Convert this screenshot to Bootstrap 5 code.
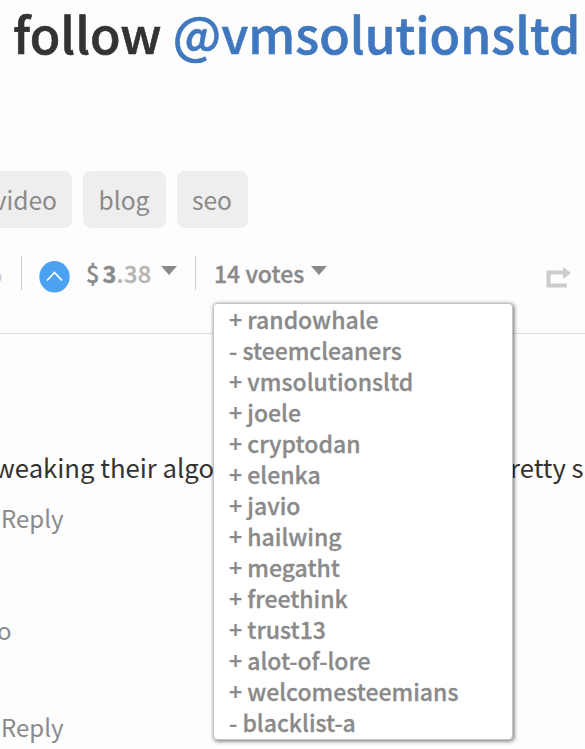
<!DOCTYPE html>
<html lang="en">
<head>
<meta charset="utf-8">
<title>Post votes</title>
<link rel="stylesheet" href="https://cdn.jsdelivr.net/npm/bootstrap@5.3.0/dist/css/bootstrap.min.css">
<style>
body{font-family:"Noto Sans CJK SC",sans-serif;background:#fdfdfd;color:#8a8a8a;height:749px;font-size:24px;line-height:31px;white-space:nowrap}
.post-title{height:72px;padding-left:13px;font-size:49.8px;line-height:64px;font-weight:500;color:#333;-webkit-text-stroke:.6px}
.post-title a{color:#4078c0}
.tags{margin-top:99px;height:57px;gap:11px}
.tag{height:57px;background:#eee;border-radius:8px;font-size:24.6px;line-height:56px;text-align:center}
.tag-video{width:82px;margin-left:-10px;padding-right:15px;text-align:right}
.tag-blog{width:83px;padding-right:1px}
.tag-seo{width:71px;padding-right:1px}
.actions{height:106px;padding-top:28px;border-bottom:1px solid #ddd;font-weight:500}
.age{width:33px;margin-left:-12px;padding-top:2px;color:#ccc;font-weight:400}
.rule{width:1px;height:34px;background:#ccc}
.upvote{width:31px;height:33px;margin:4px 0 0 17px}
.payout,.votes{margin-top:2px;-webkit-text-stroke:.35px}
.payout{margin-left:16px;width:67px;font-size:23.6px}
.dollars{margin-left:3px}
.votes{margin-left:18px;width:89px;font-size:23px}
.caret{width:16px;height:9px;margin:10px 0 0 8px;fill:#8a8a8a}
.after-payout{margin-left:18px}
.share{margin:11px 14px 0 0}
.cents{color:#b5b5b5;letter-spacing:.5px}
.vote-menu{left:213px;top:303px;width:300px;height:437px;padding:0 0 0 15px;border:1px solid #c4c4c4;border-radius:4px;box-shadow:1px 1px 4px rgba(0,0,0,.6);background:#fff;font-weight:500;font-size:23px;-webkit-text-stroke:.3px}
.vote-menu li{height:31px}
.comment{margin-top:117px;height:32px;font-size:25.7px;line-height:32px;color:#333}
.algo{width:214px;direction:rtl}
.pretty{margin-left:296px}
.reply{padding-left:1px}
.first-reply{margin-top:19px}
.author{margin-top:81px;margin-left:-3px}
.second-reply{margin-top:66px}
</style>
<script src="https://cdn.jsdelivr.net/npm/bootstrap@5.3.0/dist/js/bootstrap.bundle.min.js"></script>
</head>
<body class="position-relative overflow-hidden">
<h1 class="post-title mb-0">follow <a href="#" class="text-decoration-none">@vmsolutionsltd</a></h1>
<div class="tags d-flex">
<span class="tag tag-video">video</span><span class="tag tag-blog">blog</span><span class="tag tag-seo">seo</span>
</div>
<div class="actions d-flex align-items-start">
<span class="age">o</span>
<span class="rule"></span>
<svg class="upvote" viewBox="0 0 31 33"><ellipse cx="15.5" cy="16.8" rx="15.2" ry="15.8" fill="#4ba2f2"/><path d="M8 20.5 15.5 12.5 23 20.5" fill="none" stroke="#fff" stroke-width="1.8"/></svg>
<span class="payout">$<b class="dollars">3</b><span class="cents">.38</span></span>
<svg class="caret" viewBox="0 0 16 9"><path d="M0 0h16L8 9z"/></svg>
<span class="rule after-payout"></span>
<span class="votes">14 votes</span>
<svg class="caret" viewBox="0 0 16 9"><path d="M0 0h16L8 9z"/></svg>
<svg class="share ms-auto" width="25" height="22" viewBox="0 0 25 22"><path d="M17 5.5H2.5V18.5H21" fill="none" stroke="#ccc" stroke-width="4"/><path d="M17 0v12l8-6z" fill="#ccc"/></svg>
</div>
<ul class="vote-menu list-unstyled position-absolute mb-0">
<li>+ randowhale</li><li>- steemcleaners</li><li>+ vmsolutionsltd</li><li>+ joele</li><li>+ cryptodan</li><li>+ elenka</li><li>+ javio</li><li>+ hailwing</li><li>+ megatht</li><li>+ freethink</li><li>+ trust13</li><li>+ alot-of-lore</li><li>+ welcomesteemians</li><li>- blacklist-a</li>
</ul>
<div class="comment d-flex"><span class="algo">tweaking their algo</span><span class="pretty">retty s</span></div>
<div class="reply first-reply">Reply</div>
<div class="author">o</div>
<div class="reply second-reply">Reply</div>
</body>
</html>
